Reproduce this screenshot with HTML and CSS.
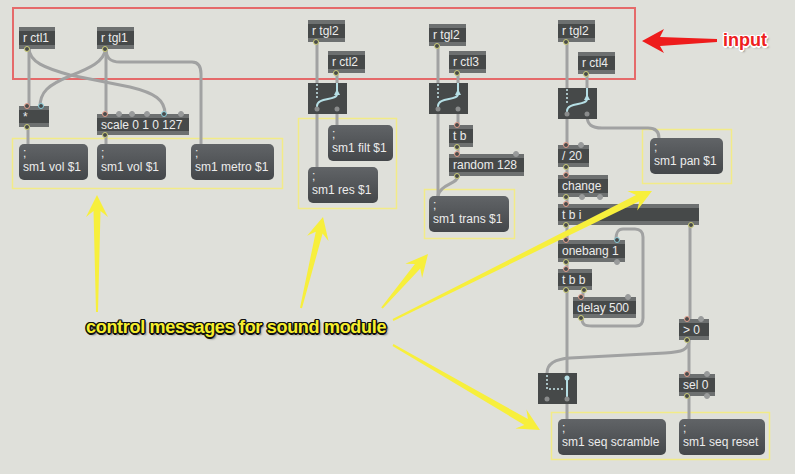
FILE: index.html
```html
<!DOCTYPE html>
<html>
<head>
<meta charset="utf-8">
<title>patch</title>
<link rel="stylesheet" href="styles.css">
</head>
<body>
<div class="patch">
  <svg class="layer" width="795" height="474" viewBox="0 0 795 474">
    <rect x="13" y="8" width="622" height="71" fill="none" stroke="#e56a6a" stroke-width="2"/>
    <g fill="none" stroke="#f2eb88" stroke-width="1.5">
      <rect x="12.5" y="138.5" width="270" height="50"/>
      <rect x="298.5" y="118.5" width="98" height="90"/>
      <rect x="424.5" y="189.5" width="90" height="49"/>
      <rect x="642.5" y="129.5" width="89" height="54"/>
      <rect x="551.5" y="412.5" width="218" height="47"/>
    </g>
    <g fill="none" stroke="#a1a2a2" stroke-width="3" stroke-linecap="round">
      <path d="M29,48 L29,107"/>
      <path d="M29,48 C29,62 45,68 70,75 L130,87 C155,93 165,100 165,114"/>
      <path d="M106,48 C104,62 90,68 70,76 C48,85 40,92 40,107"/>
      <path d="M106,48 L106,114"/>
      <path d="M106,48 C106,58 110,62 120,62 L192,62 C198,62 201,66 201,74 L201,144"/>
      <path d="M28,127 L28,144"/>
      <path d="M106,135 L106,144"/>
      <path d="M317,42 L317,83"/>
      <path d="M317,110 L317,167"/>
      <path d="M337,73 L337,83"/>
      <path d="M337,110 L337,125"/>
      <path d="M438,46 L438,83"/>
      <path d="M438,110 L438,196"/>
      <path d="M458,73 L458,83"/>
      <path d="M458,110 L458,125"/>
      <path d="M458,147 L458,154"/>
      <path d="M458,176 C458,184 440,184 438,196"/>
      <path d="M567,42 L567,88"/>
      <path d="M567,115 L567,145"/>
      <path d="M587,74 L587,88"/>
      <path d="M587,115 C587,125 592,128 602,128 L648,128 C655,128 659,131 659,138"/>
      <path d="M567,167 L567,175"/>
      <path d="M567,197 L567,204"/>
      <path d="M567,225 L567,240"/>
      <path d="M690,225 L690,319"/>
      <path d="M567,262 L567,269"/>
      <path d="M567,290 L567,419"/>
      <path d="M583,290 L583,297"/>
      <path d="M582,318 C582,325 585,326 592,326 L636,326 C641,326 643,323 643,318 L643,237 C643,232 640,229 635,229 L623,229 C618,229 616,232 616,240"/>
      <path d="M689,340 L689,374"/>
      <path d="M689,340 C689,350 682,352 665,353 L570,358 C555,359 547,364 547,373"/>
      <path d="M689,396 L689,419"/>
    </g>
  </svg>

  <div class="obj n1">r ctl1<span class="port bot pl out"></span></div>
  <div class="obj n2">r tgl1<span class="port bot pl out"></span></div>
  <div class="obj h21 n3">*<span class="port top pl hot"></span><span class="port top pr cold"></span><span class="port bot pl out"></span></div>
  <div class="obj h21 n4">scale 0 1 0 127<span class="port top pl hot"></span><span class="port top s2 free"></span><span class="port top s3 free"></span><span class="port top s4 free"></span><span class="port top s5 cold"></span><span class="port top pr free"></span><span class="port bot pl out"></span></div>

  <div class="msg m1">;<br>sm1 vol $1</div>
  <div class="msg m2">;<br>sm1 vol $1</div>
  <div class="msg m3">;<br>sm1 metro $1</div>

  <div class="obj n5">r tgl2<span class="port bot pl out"></span></div>
  <div class="obj n6">r ctl2<span class="port bot pl out"></span></div>
  <div class="gate g1">
    <svg width="39" height="31" viewBox="0 0 39 31">
      <line x1="9" y1="1" x2="9" y2="16" stroke="#c9e8ec" stroke-width="1.5" stroke-dasharray="2 2"/>
      <line x1="29" y1="0" x2="29" y2="9" stroke="#b6dfe5" stroke-width="2"/>
      <path d="M9,26 L9,23 C9,14 29,18 29,11" stroke="#b6dfe5" stroke-width="2" fill="none"/>
      <path d="M26,12 L29,6 L32,12 Z" fill="#b6dfe5"/>
      <circle cx="9" cy="26" r="2.5" fill="#8a8c8c"/>
      <circle cx="29" cy="26" r="2.5" fill="#8a8c8c"/>
    </svg>
  </div>
  <div class="msg m4">;<br>sm1 filt $1</div>
  <div class="msg m5">;<br>sm1 res $1</div>

  <div class="obj n7">r tgl2<span class="port bot pl out"></span></div>
  <div class="obj n8">r ctl3<span class="port bot pl out"></span></div>
  <div class="gate g2">
    <svg width="39" height="31" viewBox="0 0 39 31">
      <line x1="9" y1="1" x2="9" y2="16" stroke="#c9e8ec" stroke-width="1.5" stroke-dasharray="2 2"/>
      <line x1="29" y1="0" x2="29" y2="9" stroke="#b6dfe5" stroke-width="2"/>
      <path d="M9,26 L9,23 C9,14 29,18 29,11" stroke="#b6dfe5" stroke-width="2" fill="none"/>
      <path d="M26,12 L29,6 L32,12 Z" fill="#b6dfe5"/>
      <circle cx="9" cy="26" r="2.5" fill="#8a8c8c"/>
      <circle cx="29" cy="26" r="2.5" fill="#8a8c8c"/>
    </svg>
  </div>
  <div class="obj n9">t b<span class="port top pl hot"></span><span class="port bot pl out"></span></div>
  <div class="obj n10">random 128<span class="port top pl hot"></span><span class="port top pr free"></span><span class="port bot pl out"></span></div>
  <div class="msg m6">;<br>sm1 trans $1</div>

  <div class="obj n11">r tgl2<span class="port bot pl out"></span></div>
  <div class="obj n12">r ctl4<span class="port bot pl out"></span></div>
  <div class="gate g3">
    <svg width="39" height="31" viewBox="0 0 39 31">
      <line x1="9" y1="1" x2="9" y2="16" stroke="#c9e8ec" stroke-width="1.5" stroke-dasharray="2 2"/>
      <line x1="29" y1="0" x2="29" y2="9" stroke="#b6dfe5" stroke-width="2"/>
      <path d="M9,26 L9,23 C9,14 29,18 29,11" stroke="#b6dfe5" stroke-width="2" fill="none"/>
      <path d="M26,12 L29,6 L32,12 Z" fill="#b6dfe5"/>
      <circle cx="9" cy="26" r="2.5" fill="#8a8c8c"/>
      <circle cx="29" cy="26" r="2.5" fill="#8a8c8c"/>
    </svg>
  </div>
  <div class="msg m7">;<br>sm1 pan $1</div>
  <div class="obj n13">/ 20<span class="port top pl hot"></span><span class="port top pr free"></span><span class="port bot pl out"></span></div>
  <div class="obj n14">change<span class="port top pl hot"></span><span class="port bot pl out"></span><span class="port bot c2 free"></span><span class="port bot pr free"></span></div>
  <div class="obj h21 n15">t b i<span class="port top pl hot"></span><span class="port bot pl out"></span><span class="port bot pr out"></span></div>
  <div class="obj n16">onebang 1<span class="port top pl hot"></span><span class="port top pr cold"></span><span class="port bot pl out"></span><span class="port bot pr free"></span></div>
  <div class="obj h21 n17">t b b<span class="port top pl hot"></span><span class="port bot pl out"></span><span class="port bot pr out"></span></div>
  <div class="obj h21 n18">delay 500<span class="port top pl hot"></span><span class="port top pr free"></span><span class="port bot pl out"></span></div>
  <div class="obj h21 n19">&gt; 0<span class="port top pl hot"></span><span class="port top pr free"></span><span class="port bot pl out"></span></div>
  <div class="obj n20">sel 0<span class="port top pl hot"></span><span class="port top pr free"></span><span class="port bot pl out"></span><span class="port bot pr free"></span></div>
  <div class="gate g4">
    <svg width="39" height="31" viewBox="0 0 39 31">
      <path d="M9,2 L9,16 L27,16" stroke="#c9e8ec" stroke-width="1.5" stroke-dasharray="2 2" fill="none"/>
      <line x1="29" y1="4" x2="29" y2="26" stroke="#b6dfe5" stroke-width="2"/>
      <circle cx="29" cy="5" r="2.5" fill="#b6dfe5"/>
      <circle cx="9" cy="26" r="2.5" fill="#8a8c8c"/>
      <circle cx="29" cy="26" r="2.5" fill="#8a8c8c"/>
    </svg>
  </div>
  <div class="msg m8">;<br>sm1 seq scramble</div>
  <div class="msg m9">;<br>sm1 seq reset</div>

  <svg class="layer" width="795" height="474" viewBox="0 0 795 474">
    <g fill="#f7ef3c">
      <polygon points="98,312 100.5,211 108,217 97,195 86,217 93.5,211 96,312"/>
      <polygon points="302,308.2 322.6,233.4 328.5,241 323,217 307.1,235.8 315.8,231.7 300,307.8"/>
      <polygon points="382.8,308.6 420.3,268.5 422.1,277.9 428,254 405.3,263.7 414.9,263.9 381.2,307.4"/>
      <polygon points="393.4,320.9 639.3,201.2 637.2,210.6 652,191 627.4,191 636.1,195 392.6,319.1"/>
      <polygon points="392.5,345.9 524.4,425 515.4,428.5 540,430 526.4,409.5 527.9,419 393.5,344.1"/>
    </g>
    <polygon points="642,41 664,29 660,37 717,39 717,42 660,46 664,53" fill="#ee1c1c"/>
  </svg>

  <div class="note note-red">input</div>
  <div class="note note-yellow">control messages for sound module</div>
</div>
</body>
</html>
```

FILE: styles.css
```css
body {
  margin: 0;
}

.patch {
  position: relative;
  width: 795px;
  height: 474px;
  background: #dfe0da;
  overflow: hidden;
  font-family: "Liberation Sans", Arial, sans-serif;
}

.layer {
  position: absolute;
  left: 0;
  top: 0;
}

.obj {
  position: absolute;
  box-sizing: border-box;
  height: 22px;
  padding: 4px 0 0 4px;
  font-size: 12px;
  line-height: 14px;
  color: #ececec;
  white-space: nowrap;
  background: linear-gradient(to bottom, #6d7070 0, #6d7070 4px, #464949 4px, #464949 calc(100% - 4px), #6d7070 calc(100% - 4px));
}

.obj.h21 {
  height: 21px;
}

.port {
  position: absolute;
  width: 4px;
  height: 4px;
  border-radius: 50%;
  border: 1.5px solid #9a9c9c;
  background: #484b4b;
}

.port.top { top: -3px; }
.port.bot { bottom: -3px; }
.pl { left: 5px; }
.pr { right: 5px; }
.s2 { left: 19px; }
.s3 { left: 32px; }
.s4 { left: 47px; }
.s5 { left: 64px; }
.c2 { left: 21px; }

.hot { border-color: #e6a18f; }
.cold { border-color: #8ccfdc; }
.out { border-color: #cfd07a; }
.free { border-color: #999b9b; background: #999b9b; }

.msg {
  position: absolute;
  box-sizing: border-box;
  height: 36px;
  border-radius: 5px;
  padding: 2px 4px 0;
  font-size: 12px;
  line-height: 14px;
  color: #ececec;
  white-space: nowrap;
  background: linear-gradient(to bottom, #616467, #44474a);
}

.gate {
  position: absolute;
  width: 39px;
  height: 31px;
  background: #464949;
}

.gate svg {
  display: block;
}

.note {
  position: absolute;
  font-weight: bold;
  font-size: 18px;
  line-height: 20px;
  white-space: nowrap;
}

.note-yellow {
  left: 86px;
  top: 317px;
  color: #f6ee2c;
  letter-spacing: -0.3px;
  text-shadow: -1px -1px 0 #111, 1px -1px 0 #111, -1px 1px 0 #111, 1px 1px 0 #111, 0 -1.5px 0 #111, 0 1.5px 0 #111, -1.5px 0 0 #111, 1.5px 0 0 #111, 2px 2px 2px rgba(0, 0, 0, 0.55);
}

.note-red {
  left: 723px;
  top: 30px;
  color: #ee2020;
  text-shadow: -1px -1px 0 #fff, 1px -1px 0 #fff, -1px 1px 0 #fff, 1px 1px 0 #fff, 0 -1.5px 0 #fff, 0 1.5px 0 #fff, -1.5px 0 0 #fff, 1.5px 0 0 #fff, 2px 2px 2px rgba(0, 0, 0, 0.35);
}

/* node placement on the patcher canvas */
.n1 { left: 19px; top: 27px; width: 36px; }
.n2 { left: 97px; top: 27px; width: 37px; }
.n3 { left: 19px; top: 106px; width: 30px; }
.n4 { left: 97px; top: 114px; width: 92px; }
.n5 { left: 308px; top: 20px; width: 37px; }
.n6 { left: 328px; top: 51px; width: 37px; }
.n7 { left: 429px; top: 24px; width: 37px; }
.n8 { left: 449px; top: 51px; width: 37px; }
.n9 { left: 449px; top: 125px; width: 24px; }
.n10 { left: 449px; top: 154px; width: 75px; }
.n11 { left: 558px; top: 20px; width: 37px; }
.n12 { left: 578px; top: 52px; width: 37px; }
.n13 { left: 558px; top: 145px; width: 31px; }
.n14 { left: 558px; top: 175px; width: 50px; }
.n15 { left: 558px; top: 204px; width: 141px; }
.n16 { left: 558px; top: 240px; width: 67px; }
.n17 { left: 558px; top: 269px; width: 34px; }
.n18 { left: 573px; top: 297px; width: 63px; }
.n19 { left: 679px; top: 319px; width: 30px; }
.n20 { left: 679px; top: 374px; width: 36px; }

.g1 { left: 308px; top: 83px; }
.g2 { left: 429px; top: 83px; }
.g3 { left: 558px; top: 88px; }
.g4 { left: 538px; top: 373px; }

.m1 { left: 19px; top: 144px; width: 69px; }
.m2 { left: 97px; top: 144px; width: 69px; }
.m3 { left: 191px; top: 144px; width: 83px; }
.m4 { left: 328px; top: 125px; width: 65px; }
.m5 { left: 308px; top: 167px; width: 70px; }
.m6 { left: 429px; top: 196px; width: 80px; }
.m7 { left: 650px; top: 138px; width: 73px; }
.m8 { left: 558px; top: 419px; width: 108px; }
.m9 { left: 679px; top: 419px; width: 86px; }
```
